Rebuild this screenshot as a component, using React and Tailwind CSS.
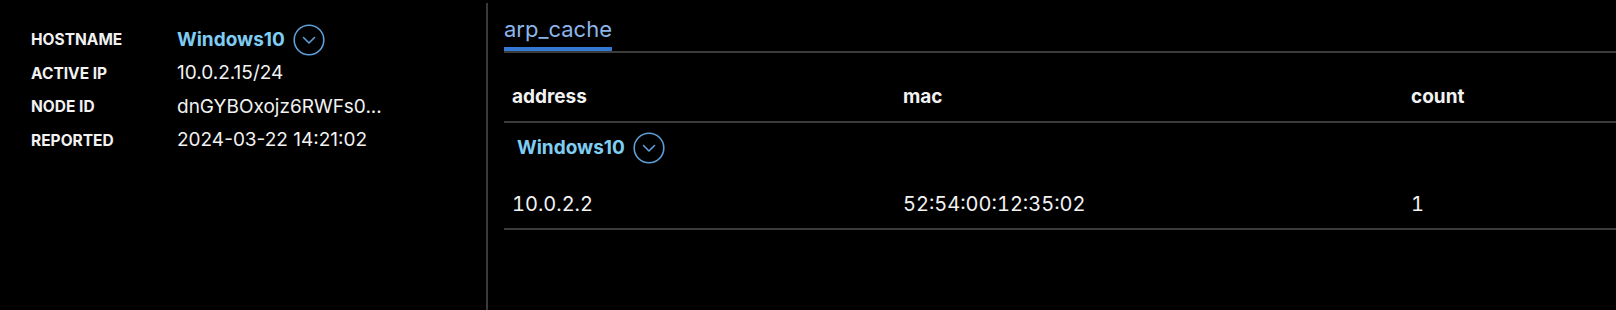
import React from "react";

const info = [
  { label: "HOSTNAME", value: "Windows10", host: true },
  { label: "ACTIVE IP", value: "10.0.2.15/24" },
  { label: "NODE ID", value: "dnGYBOxojz6RWFs0..." },
  { label: "REPORTED", value: "2024-03-22 14:21:02" },
];

const rows = [{ address: "10.0.2.2", mac: "52:54:00:12:35:02", count: "1" }];

const ChevronCircle = () => (
  <svg width="32" height="32" viewBox="0 0 32 32" fill="none" className="shrink-0">
    <circle cx="16" cy="16" r="14.8" stroke="#5e9fd8" strokeWidth="1.6" />
    <path d="M10.5 13.5 L16 19 L21.5 13.5" stroke="#5e9fd8" strokeWidth="1.6" strokeLinecap="round" strokeLinejoin="round" />
  </svg>
);

const HostLink = ({ name }) => (
  <div className="flex items-center gap-2">
    <span className="text-[19px] font-bold text-[#7fcdf3]">{name}</span>
    <ChevronCircle />
  </div>
);

export default function App() {
  return (
    <div
      className="flex h-[310px] w-full bg-black text-[#f2f2f2]"
      style={{ fontFamily: "Inter, 'Noto Sans', sans-serif" }}
    >
      {/* node info */}
      <div className="w-[486px] shrink-0 pl-[31px] pt-[23px]">
        {info.map((item) => (
          <div key={item.label} className="flex h-[33.6px] items-center">
            <span className="w-[146px] text-[15.5px] font-bold">{item.label}</span>
            {item.host ? (
              <HostLink name={item.value} />
            ) : (
              <span className="text-[19px]">{item.value}</span>
            )}
          </div>
        ))}
      </div>

      {/* divider */}
      <div className="mt-[3px] w-[2px] shrink-0 bg-[#3a3a3a]" />

      {/* tables */}
      <div className="flex-1 pl-[16px]">
        <div className="flex border-b-2 border-[#3b3b3b] pt-[15px]">
          <div className="border-b-4 border-[#3478d4] pb-[4px] text-[22px] leading-7 text-[#8cb6ea]">
            arp_cache
          </div>
        </div>

        <div className="mt-[20px]">
          <div className="flex h-[50px] items-center border-b-2 border-[#3b3b3b] text-[19px] font-bold">
            <div className="w-[391px] pl-[8px]">address</div>
            <div className="w-[508px] pl-[8px]">mac</div>
            <div className="flex-1 pl-[8px]">count</div>
          </div>
          <div className="flex h-[50px] items-center pl-[13px]">
            <HostLink name="Windows10" />
          </div>
          {rows.map((r) => (
            <div key={r.mac} className="flex h-[57px] items-center border-b-2 border-[#3b3b3b] pt-[6px] text-[20px] tabular-nums">
              <div className="w-[391px] pl-[8px]">{r.address}</div>
              <div className="w-[508px] pl-[8px]">{r.mac}</div>
              <div className="flex-1 pl-[8px]">{r.count}</div>
            </div>
          ))}
        </div>
      </div>
    </div>
  );
}
